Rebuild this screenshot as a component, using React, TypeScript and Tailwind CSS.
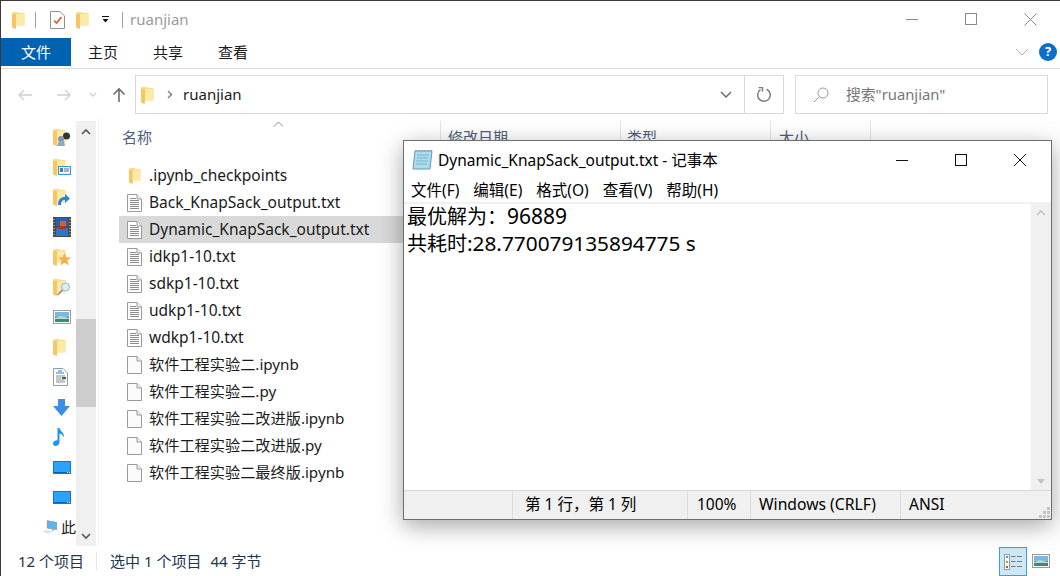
import React from "react";

const font = { fontFamily: '"Noto Sans", "Noto Sans CJK SC", sans-serif' };

function Folder({ w = 13, h = 18 }: { w?: number; h?: number }) {
  return (
    <svg width={w} height={h} viewBox="0 0 13 18" className="shrink-0">
      <path d="M0 2 L1 1 H6 L7 2 H12.5 V14.5 H4 V18 L1 17 L0 16Z" fill="#fcdc85" />
      <path d="M0 3 H4 V17.5 L1 17 L0 16Z" fill="#f5c664" />
      <path d="M4 3 H12.5 V14.5 H4Z" fill="#fde9a8" />
    </svg>
  );
}

function TxtIcon() {
  return (
    <svg width="15" height="18" viewBox="0 0 15 18" className="shrink-0">
      <path d="M0.5 0.5 H10 L14.5 5 V17.5 H0.5Z" fill="#fff" stroke="#9a9a9a" />
      <path d="M10 0.5 V5 H14.5" fill="#f0f0f0" stroke="#9a9a9a" />
      <path d="M3 4.5H9M3 6.5H12M3 8.5H12M3 10.5H12M3 12.5H12M3 14.5H12" stroke="#8c8c8c" strokeWidth="1" />
    </svg>
  );
}

function BlankIcon() {
  return (
    <svg width="15" height="18" viewBox="0 0 15 18" className="shrink-0">
      <path d="M0.5 0.5 H10 L14.5 5 V17.5 H0.5Z" fill="#fbfbfb" stroke="#9a9a9a" />
      <path d="M10 0.5 V5 H14.5" fill="#efefef" stroke="#9a9a9a" />
    </svg>
  );
}

function Monitor() {
  return (
    <svg width="18" height="13" viewBox="0 0 18 13">
      <rect x="0" y="0" width="18" height="13" fill="#0a78d4" />
      <rect x="1" y="1" width="16" height="10" fill="#29a3fb" />
      <rect x="1" y="11" width="16" height="1" fill="#0a5fb0" />
      <rect x="14" y="11" width="1" height="1" fill="#fff" />
      <rect x="16" y="11" width="1" height="1" fill="#fff" />
    </svg>
  );
}

function SideIcon({ n }: { n: number }) {
  const base = <Folder />;
  switch (n) {
    case 0:
      return (
        <div className="relative w-[18px] h-[18px]">
          {base}
          <svg width="18" height="18" viewBox="0 0 18 18" className="absolute left-0 top-0">
            <circle cx="13.5" cy="8" r="3.5" fill="#333" />
            <circle cx="8" cy="11" r="3" fill="#7d97b5" />
            <path d="M4 18 L6 13 H11 L12 18Z" fill="#8fa8c2" />
          </svg>
        </div>
      );
    case 1:
      return (
        <div className="relative w-[18px] h-[18px]">
          {base}
          <svg width="18" height="18" viewBox="0 0 18 18" className="absolute left-0 top-0">
            <rect x="5.5" y="8.5" width="12" height="8" fill="#e8f4fa" stroke="#3f93bf" />
            <rect x="7" y="10" width="3" height="4" fill="#3f7fb0" />
            <path d="M11 11H16M11 13H16" stroke="#3f7fb0" />
          </svg>
        </div>
      );
    case 2:
      return (
        <div className="relative w-[18px] h-[18px]">
          {base}
          <svg width="18" height="18" viewBox="0 0 18 18" className="absolute left-0 top-0">
            <path d="M5 17 C5 11 8 9 12 9 V6 L17 10.5 L12 15 V12 C9 12 8 14 8 17Z" fill="#2b86d8" />
          </svg>
        </div>
      );
    case 3:
      return (
        <svg width="18" height="20" viewBox="0 0 18 20">
          <rect width="18" height="20" fill="#4a4a4a" />
          <rect x="3" y="1" width="12" height="8" fill="#2a5fb0" />
          <rect x="3" y="11" width="12" height="8" fill="#2f74cc" />
          <rect x="7" y="4" width="6" height="5" fill="#c9662a" />
          <rect x="5" y="9" width="8" height="3" fill="#a33" />
          <path d="M1 2v1M1 5v1M1 8v1M1 11v1M1 14v1M1 17v1M17 2v1M17 5v1M17 8v1M17 11v1M17 14v1M17 17v1" stroke="#ddd" />
        </svg>
      );
    case 4:
      return (
        <div className="relative w-[18px] h-[18px]">
          {base}
          <svg width="18" height="18" viewBox="0 0 18 18" className="absolute left-0 top-0">
            <path d="M11.5 5 L13.3 9.3 L18 9.6 L14.4 12.6 L15.6 17.5 L11.5 14.8 L7.4 17.5 L8.6 12.6 L5 9.6 L9.7 9.3Z" fill="#f6b24a" />
          </svg>
        </div>
      );
    case 5:
      return (
        <div className="relative w-[18px] h-[18px]">
          {base}
          <svg width="18" height="18" viewBox="0 0 18 18" className="absolute left-0 top-0">
            <circle cx="12.5" cy="9" r="4" fill="#d8eef9" stroke="#9ab8c8" />
            <path d="M9.5 12 L4.5 17" stroke="#8a8a8a" strokeWidth="1.6" />
          </svg>
        </div>
      );
    case 6:
      return (
        <svg width="18" height="14" viewBox="0 0 18 14">
          <rect x="0.5" y="0.5" width="17" height="13" fill="#fff" stroke="#9c9c9c" />
          <rect x="2" y="2" width="14" height="5" fill="#7ab8e8" />
          <rect x="2" y="7" width="14" height="5" fill="#3f8a6c" />
          <path d="M2 8 L8 6 L16 8 V9 H2Z" fill="#bcd6c8" />
        </svg>
      );
    case 7:
      return base;
    case 8:
      return (
        <svg width="15" height="18" viewBox="0 0 15 18">
          <path d="M0.5 0.5 H10 L14.5 5 V17.5 H0.5Z" fill="#fff" stroke="#9a9a9a" />
          <path d="M5 3H9M3 5H11" stroke="#1f86d8" strokeWidth="1.2" />
          <path d="M3 8H12M3 10H8M3 12H12M3 14H12" stroke="#8c8c8c" />
          <rect x="9" y="9" width="4" height="2" fill="#2f6f5c" />
        </svg>
      );
    case 9:
      return (
        <svg width="17" height="17" viewBox="0 0 17 17">
          <path d="M5 0 H12 V7 H17 L8.5 17 L0 7 H5Z" fill="#3b8ee6" />
        </svg>
      );
    case 10:
      return (
        <svg width="12" height="18" viewBox="0 0 12 18">
          <path d="M4.5 0 H6.5 C6.8 3 11.5 4.5 11 9.5 C10 7 8.5 6 6.5 5.5 V14 C6.5 16.5 4.5 18 2.5 18 C1 18 0 17 0 15.5 C0 13.5 2.5 12 4.5 12.4Z" fill="#1e95ee" />
        </svg>
      );
    case 11:
    case 12:
      return <Monitor />;
    default:
      return (
        <svg width="20" height="18" viewBox="0 0 20 18">
          <path d="M7 0.5 L19.5 3 V12.5 L7 10.5Z" fill="#55b5f5" stroke="#8a8f94" />
          <path d="M13 12 V14 H16 V12.5Z" fill="#aab2b8" />
          <path d="M0 15 L6 13 L15 15 L8 18Z" fill="#e2e6ea" />
        </svg>
      );
  }
}

const sideItems = [0, 1, 2, 3, 4, 5, 6, 7, 8, 9, 10, 11, 12];

const files: { name: string; kind: "folder" | "txt" | "blank"; sel?: boolean }[] = [
  { name: ".ipynb_checkpoints", kind: "folder" },
  { name: "Back_KnapSack_output.txt", kind: "txt" },
  { name: "Dynamic_KnapSack_output.txt", kind: "txt", sel: true },
  { name: "idkp1-10.txt", kind: "txt" },
  { name: "sdkp1-10.txt", kind: "txt" },
  { name: "udkp1-10.txt", kind: "txt" },
  { name: "wdkp1-10.txt", kind: "txt" },
  { name: "软件工程实验二.ipynb", kind: "blank" },
  { name: "软件工程实验二.py", kind: "blank" },
  { name: "软件工程实验二改进版.ipynb", kind: "blank" },
  { name: "软件工程实验二改进版.py", kind: "blank" },
  { name: "软件工程实验二最终版.ipynb", kind: "blank" },
];

function Notepad() {
  return (
    <div className="absolute left-[402px] top-[139px] w-[649px] h-[380px] bg-[#f0f0f0] border border-[#6e6e6e] shadow-[0_6px_22px_rgba(0,0,0,0.35)] flex flex-col text-black">
      <div className="h-[37px] bg-white flex items-center shrink-0">
        <svg width="22" height="21" viewBox="0 0 22 21" className="ml-[8px] mr-[4px] shrink-0">
          <path d="M3 2 H20 L18 20 H1Z" fill="#a9dcef" stroke="#6a98b0" />
          <path d="M5 6H17M5 9H16M4 12H16M4 15H15" stroke="#7fb2cb" />
          <path d="M4 2v-1M7 2v-1M10 2v-1M13 2v-1M16 2v-1M19 2v-1" stroke="#6b7d88" />
        </svg>
        <span className="text-[15.5px] leading-[20px] whitespace-nowrap">Dynamic_KnapSack_output.txt - 记事本</span>
        <div className="ml-auto flex items-center">
          <svg width="14" height="14" viewBox="0 0 14 14" className="mr-[45px]"><path d="M1 7.5H13" stroke="#111" /></svg>
          <svg width="14" height="14" viewBox="0 0 14 14" className="mr-[45px]"><rect x="1.5" y="1.5" width="11" height="11" fill="none" stroke="#111" /></svg>
          <svg width="14" height="14" viewBox="0 0 14 14" className="mr-[24px]"><path d="M1 1L13 13M13 1L1 13" stroke="#111" /></svg>
        </div>
      </div>
      <div className="h-[24px] bg-white flex items-center pl-[7px] gap-[14px] text-[15.5px] leading-[20px] shrink-0">
        <span>文件(F)</span>
        <span>编辑(E)</span>
        <span>格式(O)</span>
        <span>查看(V)</span>
        <span>帮助(H)</span>
      </div>
      <div className="h-[2px] bg-[#f0f0f0] shrink-0" />
      <div className="flex-1 flex min-h-0 bg-white">
        <div className="flex-1 pl-[3px] -mt-px text-[20px] leading-[27px] whitespace-nowrap">
          <div>最优解为：<span className="text-[21px]">96889</span></div>
          <div>共耗时<span className="text-[20.8px]">:28.770079135894775 s</span></div>
        </div>
        <div className="w-[20px] bg-[#f0f0f0] flex flex-col items-center justify-between py-[5px]">
          <svg width="10" height="7" viewBox="0 0 10 7"><path d="M1 6L5 2L9 6" fill="none" stroke="#c4c4c4" strokeWidth="1.6" /></svg>
          <svg width="10" height="6" viewBox="0 0 10 6"><path d="M1 0H9L5 5Z" fill="#c4c4c4" /></svg>
        </div>
      </div>
      <div className="h-[29px] bg-[#f0f0f0] border-t border-[#d7d7d7] flex items-center text-[15.5px] shrink-0 relative">
        <div className="w-[108px] h-full" />
        <div className="w-[175px] h-full border-l border-[#dcdcdc] pl-[12px] flex items-center whitespace-nowrap">第 1 行，第 1 列</div>
        <div className="w-[63px] h-full border-l border-[#dcdcdc] pl-[9px] flex items-center">100%</div>
        <div className="w-[150px] h-full border-l border-[#dcdcdc] pl-[8px] flex items-center whitespace-nowrap text-[15.7px]">Windows (CRLF)</div>
        <div className="flex-1 h-full border-l border-[#dcdcdc] pl-[8px] flex items-center">ANSI</div>
        <svg width="11" height="11" viewBox="0 0 11 11" className="absolute right-[1px] bottom-[1px]">
          <path d="M8 0h3v3h-3zM4 4h3v3h-3zM8 4h3v3h-3zM0 8h3v3h-3zM4 8h3v3h-3zM8 8h3v3h-3z" fill="#c4c4c4" />
        </svg>
      </div>
    </div>
  );
}

export default function App() {
  return (
    <div className="relative w-[1060px] h-[576px] overflow-hidden bg-white flex flex-col border-l border-t border-[#3a3a3a] text-[#1a1a1a]" style={font}>
      {/* Title bar */}
      <div className="h-[37px] flex items-center shrink-0 pl-[11px]">
        <Folder />
        <div className="w-px h-[16px] bg-[#a0a0a0] ml-[10px] mr-[14px]" />
        <svg width="15" height="18" viewBox="0 0 15 18" className="shrink-0">
          <path d="M0.5 0.5H10L14.5 5V17.5H0.5Z" fill="#fff" stroke="#8f8f8f" />
          <path d="M4 9.5L6.5 12L11.5 6" fill="none" stroke="#e5532b" strokeWidth="1.6" />
        </svg>
        <div className="ml-[11px]"><Folder /></div>
        <svg width="9" height="8" viewBox="0 0 9 8" className="ml-[12px] shrink-0">
          <path d="M1 0.5H8" stroke="#111" /><path d="M1.5 3H7.5L4.5 6.5Z" fill="#111" />
        </svg>
        <div className="w-px h-[16px] bg-[#a0a0a0] ml-[12px] mr-[7px]" />
        <span className="text-[15px] text-[#9b9b9b]">ruanjian</span>
        <div className="ml-auto flex items-center -mt-px">
          <svg width="12" height="12" viewBox="0 0 12 12" className="mr-[47px]"><path d="M0 6.5H12" stroke="#8a8a8a" /></svg>
          <svg width="12" height="12" viewBox="0 0 12 12" className="mr-[47px]"><rect x="0.5" y="0.5" width="11" height="11" fill="none" stroke="#8a8a8a" /></svg>
          <svg width="13" height="13" viewBox="0 0 13 13" className="mr-[23px]"><path d="M0.5 0.5L12.5 12.5M12.5 0.5L0.5 12.5" stroke="#8a8a8a" /></svg>
        </div>
      </div>
      {/* Ribbon tabs */}
      <div className="h-[31px] flex items-start border-b border-[#dadada] shrink-0 text-[15px] relative">
        <div className="w-[70px] h-[28px] bg-[#0063b1] text-white flex items-center justify-center">文件</div>
        <div className="w-[64px] h-[28px] flex items-center justify-center">主页</div>
        <div className="w-[66px] h-[28px] flex items-center justify-center">共享</div>
        <div className="w-[64px] h-[28px] flex items-center justify-center">查看</div>
        <div className="ml-auto mr-[3px] mt-[5px] flex items-center gap-[10px]">
          <svg width="14" height="8" viewBox="0 0 14 8"><path d="M1 1L7 7L13 1" fill="none" stroke="#b0b0b0" /></svg>
          <div className="w-[18px] h-[18px] rounded-full bg-[#0a6fc9] text-white text-[13px] font-bold flex items-center justify-center">?</div>
        </div>
      </div>
      {/* Address row */}
      <div className="h-[50px] flex items-center shrink-0 pt-[1px]">
        <div className="w-[134px] pl-[16px] flex items-center shrink-0">
          <svg width="16" height="14" viewBox="0 0 16 14"><path d="M15 7H2M7 2L2 7L7 12" fill="none" stroke="#d0d0d0" strokeWidth="1.4" /></svg>
          <svg width="16" height="14" viewBox="0 0 16 14" className="ml-[23px]"><path d="M1 7H14M9 2L14 7L9 12" fill="none" stroke="#d0d0d0" strokeWidth="1.4" /></svg>
          <svg width="8" height="6" viewBox="0 0 8 6" className="ml-[17px]"><path d="M1 1L4 4L7 1" fill="none" stroke="#d0d0d0" strokeWidth="1.4" /></svg>
          <svg width="14" height="16" viewBox="0 0 14 16" className="ml-[15px]"><path d="M7 15V2M1.5 7.5L7 2L12.5 7.5" fill="none" stroke="#6d6d6d" strokeWidth="1.6" /></svg>
        </div>
        <div className="w-[649px] h-[39px] border border-[#d9d9d9] flex items-center shrink-0">
          <div className="ml-[5px]"><Folder /></div>
          <svg width="6" height="9" viewBox="0 0 6 9" className="ml-[13px]"><path d="M1 1L4.5 4.5L1 8" fill="none" stroke="#7a7a7a" strokeWidth="1.4" /></svg>
          <span className="ml-[10px] text-[15px] text-[#1a1a1a]">ruanjian</span>
          <svg width="12" height="7" viewBox="0 0 12 7" className="ml-auto mr-[12px]"><path d="M1 1L6 6L11 1" fill="none" stroke="#6d6d6d" strokeWidth="1.5" /></svg>
          <div className="w-[39px] h-full border-l border-[#d9d9d9] flex items-center justify-center">
            <svg width="16" height="16" viewBox="0 0 16 16"><path d="M10.5 2.2A6.3 6.3 0 1 1 4.5 2.7" fill="none" stroke="#7d7d7d" strokeWidth="1.5" /><path d="M2.5 0.5H6.5V4.5" fill="none" stroke="#7d7d7d" strokeWidth="1.5" /></svg>
          </div>
        </div>
        <div className="ml-[11px] w-[253px] h-[39px] border border-[#d9d9d9] flex items-center shrink-0">
          <svg width="16" height="16" viewBox="0 0 16 16" className="ml-[17px]"><circle cx="10" cy="6" r="5" fill="none" stroke="#999" /><path d="M6.5 9.5L1 15" stroke="#999" /></svg>
          <span className="ml-[17px] text-[14.8px] text-[#777]">搜索"ruanjian"</span>
        </div>
      </div>
      {/* Main */}
      <div className="flex-1 flex min-h-0">
        <div className="w-[75px] shrink-0 flex flex-col pt-[3px] overflow-hidden">
          {sideItems.map((n) => (
            <div key={n} className="h-[30px] pl-[52px] flex items-center shrink-0">
              <SideIcon n={n} />
            </div>
          ))}
          <div className="h-[30px] pl-[41px] flex items-center gap-[4px] shrink-0">
            <SideIcon n={13} />
            <span className="text-[15px] whitespace-nowrap">此</span>
          </div>
        </div>
        <div className="w-[20px] shrink-0 bg-[#f0f0f0] flex flex-col mt-[2px]">
          <div className="h-[20px] flex items-center justify-center shrink-0">
            <svg width="10" height="7" viewBox="0 0 10 7"><path d="M1 6L5 2L9 6" fill="none" stroke="#555" strokeWidth="1.6" /></svg>
          </div>
          <div className="h-[178px] shrink-0" />
          <div className="h-[88px] bg-[#cdcdcd] shrink-0" />
          <div className="flex-1" />
          <div className="h-[20px] flex items-center justify-center shrink-0">
            <svg width="10" height="7" viewBox="0 0 10 7"><path d="M1 1L5 5L9 1" fill="none" stroke="#555" strokeWidth="1.6" /></svg>
          </div>
        </div>
        <div className="w-[2px] shrink-0" />
        <div className="flex-1 border-l border-[#f0f0f0] flex flex-col min-w-0">
          <div className="h-[34px] mt-[2px] flex items-center text-[15px] text-[#4c607a] shrink-0 relative">
            <svg width="11" height="6" viewBox="0 0 11 6" className="absolute left-[174px] top-[0px]"><path d="M1 5.5L5.5 1L10 5.5" fill="none" stroke="#8a8a8a" /></svg>
            <div className="w-[342px] h-full pl-[23px] pb-[2px] flex items-center border-r border-[#e5e5e5]">名称</div>
            <div className="w-[180px] h-full pl-[7px] pb-[2px] flex items-center border-r border-[#e5e5e5]">修改日期</div>
            <div className="w-[150px] h-full pl-[6px] pb-[2px] flex items-center border-r border-[#e5e5e5]">类型</div>
            <div className="w-[100px] h-full pl-[8px] pb-[2px] flex items-center border-r border-[#e5e5e5]">大小</div>
          </div>
          <div className="pt-[7px] flex flex-col">
            {files.map((f) => (
              <div key={f.name} className={`h-[27px] w-[330px] ml-[20px] pl-[8px] flex items-center gap-[7px] whitespace-nowrap ${f.kind === "blank" ? "text-[15.2px]" : "text-[15.5px]"} ${f.sel ? "bg-[#d9d9d9]" : ""}`}>
                <div className="w-[15px] flex justify-center">
                  {f.kind === "folder" ? <Folder w={12} h={17} /> : f.kind === "txt" ? <TxtIcon /> : <BlankIcon />}
                </div>
                <span>{f.name}</span>
              </div>
            ))}
          </div>
        </div>
      </div>
      {/* Status bar */}
      <div className="h-[30px] flex items-center shrink-0 text-[15px] text-[#22344f] pl-[17px]">
        <span>12 个项目</span>
        <div className="w-px h-[18px] bg-[#e4e4e4] ml-[12px] mr-[13px]" />
        <span>选中 1 个项目</span>
        <span className="ml-[9px]">44 字节</span>
        <div className="ml-auto mr-[10px] flex items-center gap-[5px]">
          <div className="w-[28px] h-[29px] mt-px bg-[#cce8f6] border border-[#3e9fd6] flex items-center justify-center">
            <svg width="18" height="16" viewBox="0 0 18 16">
              <rect x="0.5" y="0.5" width="5" height="15" fill="#fff" stroke="#999" />
              <rect x="2" y="2" width="2" height="2" fill="#5a8fc0" />
              <rect x="2" y="7" width="2" height="2" fill="#b0a040" />
              <rect x="2" y="12" width="2" height="2" fill="#c05030" />
              <path d="M7 2.5H11.5M13 2.5H18M7 7.5H11.5M13 7.5H18M7 12.5H11.5M13 12.5H18" stroke="#777" />
            </svg>
          </div>
          <svg width="18" height="14" viewBox="0 0 18 14">
            <rect x="0.5" y="0.5" width="17" height="13" fill="#fff" stroke="#999" />
            <rect x="2" y="2" width="14" height="5" fill="#7ab8e8" />
            <rect x="2" y="7" width="14" height="5" fill="#3f8a6c" />
            <path d="M2 8 L8 6 L16 8 V9 H2Z" fill="#bcd6c8" />
          </svg>
        </div>
      </div>
      <Notepad />
    </div>
  );
}
